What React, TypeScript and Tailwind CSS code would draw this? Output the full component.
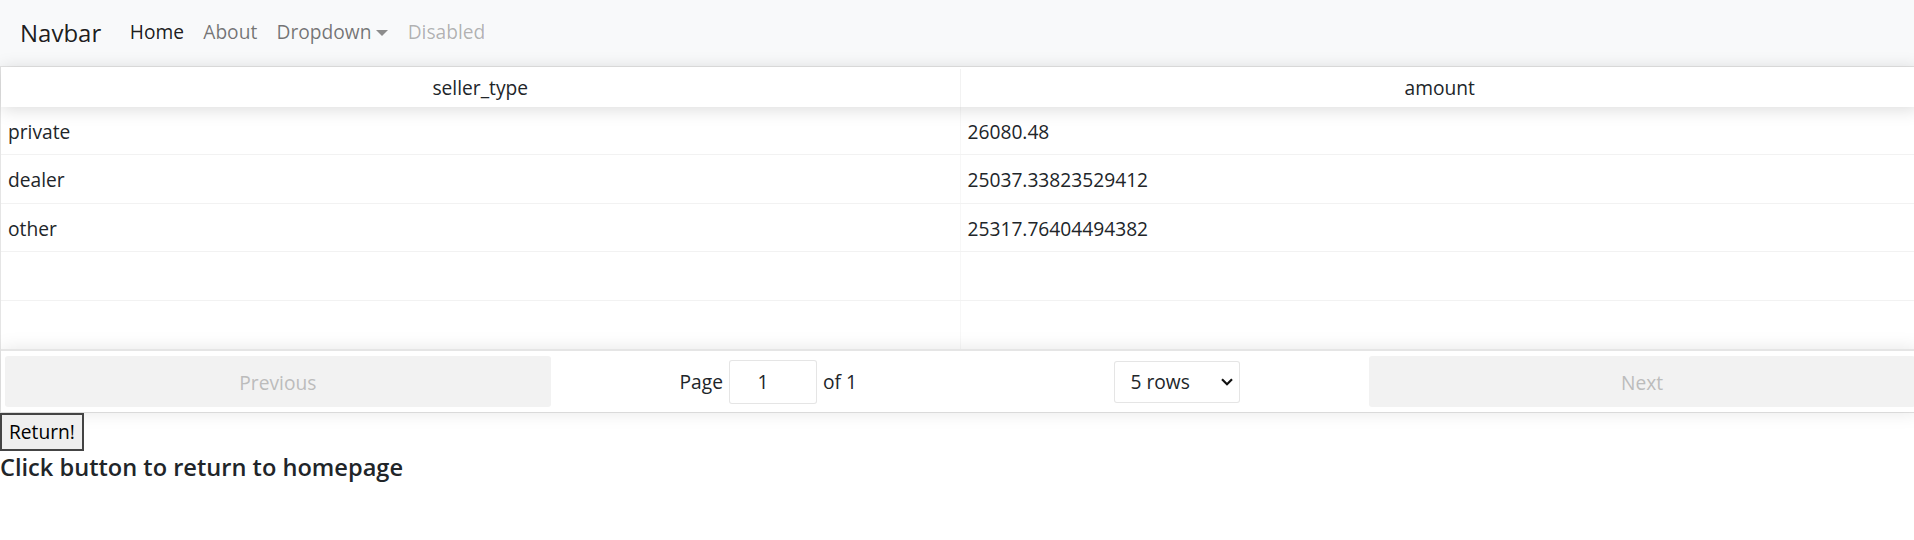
import React from "react"

const rows = [
  { seller_type: "private", amount: "26080.48" },
  { seller_type: "dealer", amount: "25037.33823529412" },
  { seller_type: "other", amount: "25317.76404494382" },
  { seller_type: "", amount: "" },
  { seller_type: "", amount: "" },
]

function NavBar() {
  return (
    <nav className="h-[66px] bg-[#f8f9fa] flex items-center px-[20px] pb-[1px]">
      <a className="text-[24px] leading-[36px] text-black/90 mr-[19px]">Navbar</a>
      <ul className="flex items-center text-[19.2px] leading-[28.8px]">
        <li className="px-[9.6px] text-black/90">Home</li>
        <li className="px-[9.6px] text-black/55">About</li>
        <li className="px-[9.6px] text-black/55 flex items-center">
          Dropdown
          <span className="ml-[5px] mt-[2px] border-x-[6px] border-x-transparent border-t-[6px] border-t-[#8c8c8c]" />
        </li>
        <li className="px-[9.6px] text-black/30">Disabled</li>
      </ul>
    </nav>
  )
}

function Pagination() {
  return (
    <div className="relative z-10 flex items-stretch border-t-2 border-black/10 py-[5px] px-[4px] shadow-[0_0_18px_0_rgba(0,0,0,0.1)] bg-white">
      <div className="flex-1">
        <button disabled className="w-full h-[51px] pt-[3px] rounded-[3px] bg-[#f2f2f2] text-[#bcbcbc]">
          Previous
        </button>
      </div>
      <div className="flex-[1.5] flex items-center justify-around pt-[2px]">
        <div className="flex items-center gap-[6px] whitespace-nowrap">
          <span>Page</span>
          <div className="w-[88px] h-[44px] rounded-[3px] border border-black/10 bg-white flex items-center justify-center pr-[20px]">
            1
          </div>
          <span>of 1</span>
        </div>
        <div className="w-[126px] h-[42px] rounded-[3px] border border-black/10 bg-white flex items-center justify-between pl-[15px] pr-[6px]">
          <span>5 rows</span>
          <svg width="12" height="8" viewBox="0 0 12 8" fill="none">
            <polyline points="1,1.2 6,6.2 11,1.2" stroke="#111" strokeWidth="2.2" />
          </svg>
        </div>
      </div>
      <div className="flex-1">
        <button disabled className="w-full h-[51px] pt-[3px] rounded-[3px] bg-[#f2f2f2] text-[#bcbcbc]">
          Next
        </button>
      </div>
    </div>
  )
}

export default function App() {
  return (
    <div className="w-full min-h-screen overflow-hidden bg-white text-[#212529] text-[19.2px] leading-[28.8px] font-['Open_Sans','Noto_Sans',sans-serif]">
      <NavBar />

      {/* table */}
      <div className="w-[1920px] border border-black/10 flex flex-col">
        <div className="relative z-10 flex h-[40px] pt-[2px] bg-white shadow-[0_2px_18px_0_rgba(0,0,0,0.15)]">
          <div className="flex-1 flex items-center justify-center border-r border-black/5">seller_type</div>
          <div className="flex-1 flex items-center justify-center">amount</div>
        </div>
        {rows.map((row, i) => (
          <div
            key={i}
            className={`flex h-[48.4px] ${i < rows.length - 1 ? "border-b border-black/5" : ""}`}
          >
            <div className="flex-1 flex items-center px-[7px] pt-[3px] border-r border-black/[0.03]">{row.seller_type}</div>
            <div className="flex-1 flex items-center px-[7px] pt-[3px]">{row.amount}</div>
          </div>
        ))}
        <Pagination />
      </div>

      <button className="relative z-10 block h-[38px] px-[7px] border-2 border-[#444] bg-[#efefef] text-black">
        Return!
      </button>
      <h5 className="mt-[2px] text-[23.6px] leading-[28.8px] font-semibold">Click button to return to homepage</h5>
    </div>
  )
}
